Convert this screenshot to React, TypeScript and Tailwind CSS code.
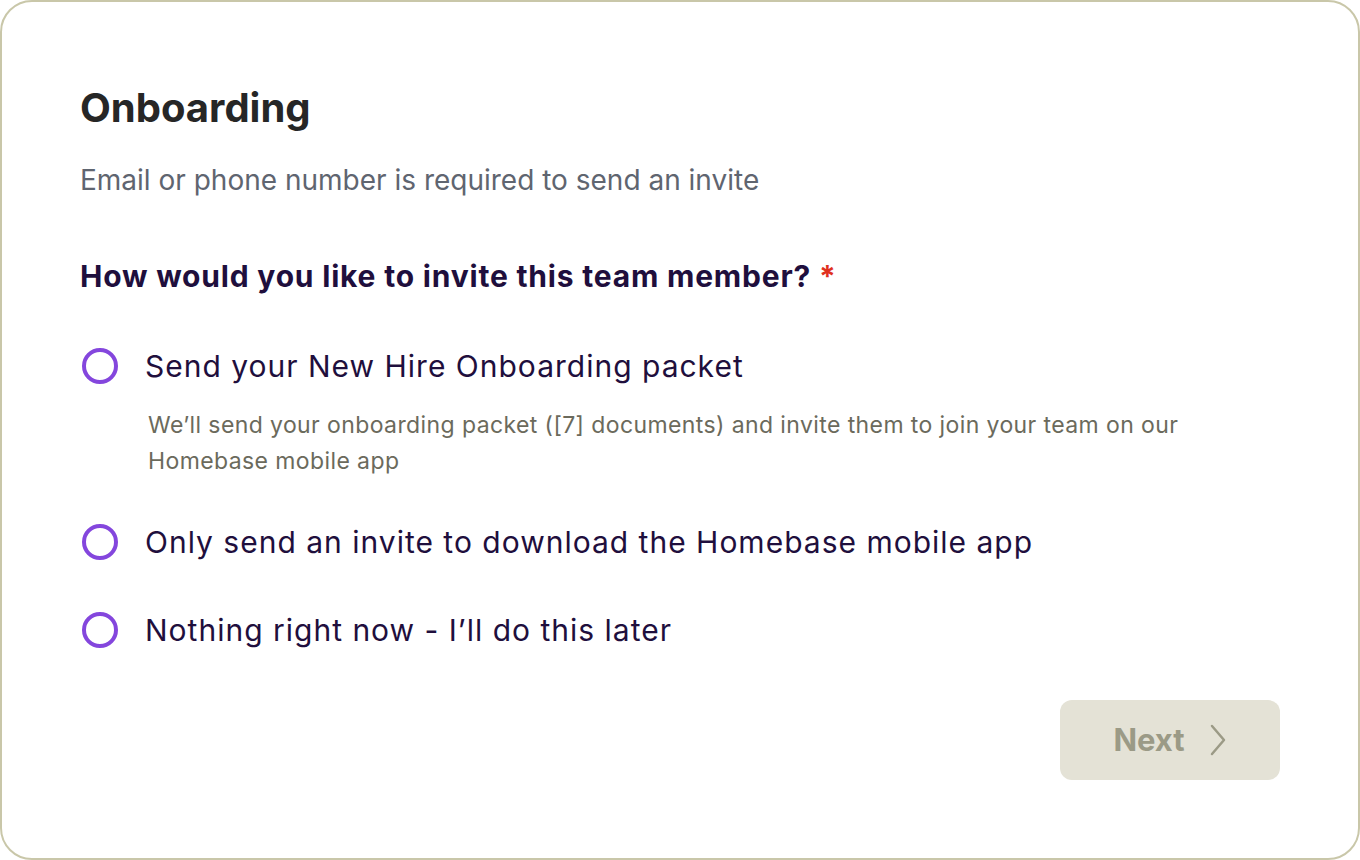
import React from 'react';

const OPTIONS = [
  {
    label: 'Send your New Hire Onboarding packet',
    description:
      'We’ll send your onboarding packet ([7] documents) and invite them to join your team on our Homebase mobile app',
  },
  { label: 'Only send an invite to download the Homebase mobile app' },
  { label: 'Nothing right now - I’ll do this later' },
];

const Radio: React.FC = () => (
  <span className="ml-[2px] flex-shrink-0 w-[36px] h-[36px] rounded-full border-[4px] border-[#8446dd] bg-white" />
);

const App: React.FC = () => {
  return (
    <div className="w-[1360px] h-[860px] bg-white">
      <div className="h-full rounded-[32px] border-2 border-[#c9c7a9] bg-white px-[78px] pt-[82px] flex flex-col font-['Inter',sans-serif]">
        <h1 className="text-[40px] leading-[48px] font-bold text-[#262626]">Onboarding</h1>
        <p className="mt-[30px] text-[28px] leading-[36px] text-[#5f6570]">
          Email or phone number is required to send an invite
        </p>

        <h2 className="mt-[58px] text-[30px] leading-[40px] font-bold text-[#1f0f3d] tracking-[0.8px]">
          How would you like to invite this team member? <span className="text-[#e0301e]">*</span>
        </h2>

        <div className="mt-[50px] flex flex-col">
          {OPTIONS.map((opt, i) => (
            <div key={i} className={i === 0 ? '' : i === 1 ? 'mt-[43px]' : 'mt-[48px]'}>
              <label className="flex items-center gap-[27px] cursor-pointer">
                <Radio />
                <span className="text-[30px] leading-[40px] text-[#1f0f3d] tracking-[1px]">{opt.label}</span>
              </label>
              {opt.description && (
                <p className="mt-[21px] ml-[68px] max-w-[1060px] text-[23px] leading-[36px] text-[#6b6a5c] tracking-[0.4px]">
                  {opt.description}
                </p>
              )}
            </div>
          ))}
        </div>

        <div className="mt-[50px] flex justify-end">
          <button
            disabled
            className="w-[220px] h-[80px] rounded-[12px] bg-[#e4e2d6] flex items-center justify-center gap-[24px] text-[31px] font-bold text-[#9b9a86]"
          >
            Next
            <svg width="18" height="34" viewBox="0 0 18 34" fill="none" stroke="#9b9a86" strokeWidth="2.5" strokeLinecap="round" strokeLinejoin="round">
              <path d="M3 3 L15 17 L3 31" />
            </svg>
          </button>
        </div>
      </div>
    </div>
  );
};

export default App;
